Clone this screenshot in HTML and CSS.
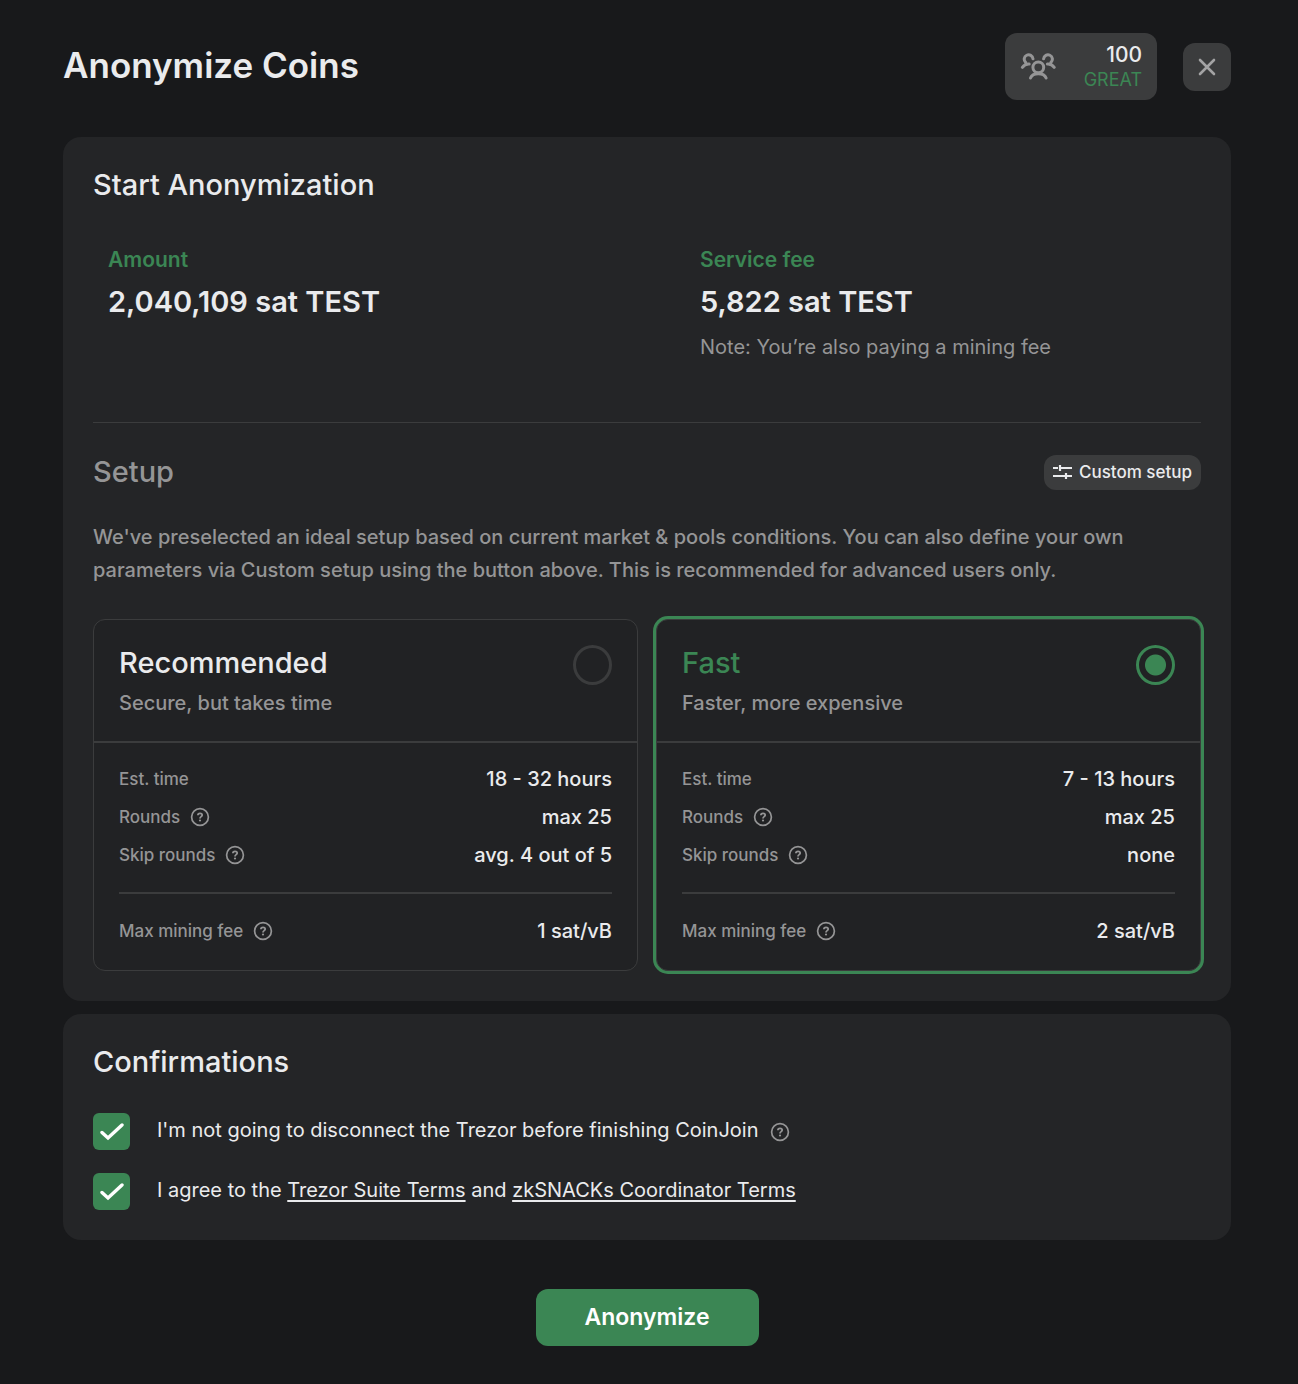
FILE: index.html
```html
<!DOCTYPE html>
<html lang="en">
<head>
<meta charset="utf-8">
<meta name="viewport" content="width=device-width, initial-scale=1">
<title>Anonymize Coins</title>
<link rel="stylesheet" href="styles.css">
</head>
<body>
<svg class="sprite" aria-hidden="true">
  <symbol id="help" viewBox="0 0 20 20">
    <circle cx="10" cy="10" r="8.4" fill="none" stroke="currentColor" stroke-width="1.7"/>
    <path d="M7.9 8.2C7.9 5.7 12.2 5.7 12.2 8.1C12.2 9.7 10 9.6 10 11.4" fill="none" stroke="currentColor" stroke-width="1.8"/>
    <circle cx="10" cy="13.5" r="1.1" fill="currentColor"/>
  </symbol>
</svg>
<form class="page">
  <header class="top">
    <h1 class="title">Anonymize Coins</h1>
    <div class="privacy">
      <svg class="people" viewBox="0 0 36 28" aria-hidden="true" fill="none" stroke="currentColor" stroke-width="3" stroke-linecap="round">
        <circle cx="18.3" cy="14.3" r="5.4"/>
        <path d="M10.5 25C12.5 19.2 24.1 19.2 26.1 25"/>
        <path d="M5.6 9.4A4.4 4.4 0 1 1 13 5.8M2.4 14.4C4.4 11.6 6.4 10.9 9.2 11.1"/>
        <path d="M31 9.4A4.4 4.4 0 1 0 23.6 5.800M34.200 14.400C32.200 11.600 30.200 10.900 27.400 11.100"/>
      </svg>
      <div class="score"><span class="score-value">100</span><span class="score-label">GREAT</span></div>
    </div>
    <button class="close" type="button" aria-label="Close">
      <svg viewBox="0 0 18 18" width="18" height="18" aria-hidden="true"><path d="M2 2L16 16M16 2L2 16" fill="none" stroke="currentColor" stroke-width="2.6" stroke-linecap="round"/></svg>
    </button>
  </header>

  <section class="card">
    <h2 class="heading">Start Anonymization</h2>
    <div class="summary">
      <div class="figure">
        <h3 class="figure-label">Amount</h3>
        <p class="figure-value">2,040,109 sat TEST</p>
      </div>
      <div class="figure">
        <h3 class="figure-label">Service fee</h3>
        <p class="figure-value">5,822 sat TEST</p>
        <p class="figure-note">Note: You’re also paying a mining fee</p>
      </div>
    </div>
    <div class="setup">
      <h2 class="heading heading-muted">Setup</h2>
      <button class="custom" type="button">
        <svg viewBox="0 0 19 16" width="19" height="16" aria-hidden="true" fill="none" stroke="currentColor" stroke-width="2.2"><path d="M0 4H5M7 1V7M7 4H19M0 12H12M19 12H15M13 9V15M13 12H16"/></svg>
        Custom setup
      </button>
    </div>
    <p class="intro">We've preselected an ideal setup based on current market &amp; pools conditions. You can also define your own parameters via Custom setup using the button above. This is recommended for advanced users only.</p>
    <div class="options">
      <div class="option">
        <div class="option-head">
          <label class="option-text" for="recommended">
            <span class="option-name">Recommended</span>
            <span class="option-hint">Secure, but takes time</span>
          </label>
          <input class="radio" type="radio" name="setup" id="recommended">
        </div>
        <dl class="facts">
          <div class="fact"><dt>Est. time</dt><dd>18 - 32 hours</dd></div>
          <div class="fact"><dt>Rounds <svg class="help"><use href="#help"/></svg></dt><dd>max 25</dd></div>
          <div class="fact"><dt>Skip rounds <svg class="help"><use href="#help"/></svg></dt><dd>avg. 4 out of 5</dd></div>
          <div class="fact fact-fee"><dt>Max mining fee <svg class="help"><use href="#help"/></svg></dt><dd>1 sat/vB</dd></div>
        </dl>
      </div>
      <div class="option option-selected">
        <div class="option-head">
          <label class="option-text" for="fast">
            <span class="option-name">Fast</span>
            <span class="option-hint">Faster, more expensive</span>
          </label>
          <input class="radio" type="radio" name="setup" id="fast" checked>
        </div>
        <dl class="facts">
          <div class="fact"><dt>Est. time</dt><dd>7 - 13 hours</dd></div>
          <div class="fact"><dt>Rounds <svg class="help"><use href="#help"/></svg></dt><dd>max 25</dd></div>
          <div class="fact"><dt>Skip rounds <svg class="help"><use href="#help"/></svg></dt><dd>none</dd></div>
          <div class="fact fact-fee"><dt>Max mining fee <svg class="help"><use href="#help"/></svg></dt><dd>2 sat/vB</dd></div>
        </dl>
      </div>
    </div>
  </section>

  <section class="card">
    <h2 class="heading">Confirmations</h2>
    <div class="checks">
      <div class="check">
        <span class="box"><input class="tick" type="checkbox" id="connected" checked><svg class="mark" viewBox="0 0 24 18" aria-hidden="true"><path d="M2 9.5L8 15L22 2" fill="none" stroke="currentColor" stroke-width="3.4" stroke-linecap="round"/></svg></span>
        <label for="connected">I'm not going to disconnect the Trezor before finishing CoinJoin</label>
        <svg class="help"><use href="#help"/></svg>
      </div>
      <div class="check">
        <span class="box"><input class="tick" type="checkbox" id="terms" checked><svg class="mark" viewBox="0 0 24 18" aria-hidden="true"><path d="M2 9.5L8 15L22 2" fill="none" stroke="currentColor" stroke-width="3.4" stroke-linecap="round"/></svg></span>
        <label for="terms">I agree to the <a href="#suite-terms">Trezor Suite Terms</a> and <a href="#coordinator-terms">zkSNACKs Coordinator Terms</a></label>
      </div>
    </div>
  </section>

  <button class="submit" type="submit">Anonymize</button>
</form>
</body>
</html>
```

FILE: styles.css
```css
:root {
  --bg: #18191b;
  --card: #242527;
  --option: #212224;
  --grey: #3b3c3d;
  --text: #eaebed;
  --muted: #959596;
  --green: #3b8654;
}

* {
  box-sizing: border-box;
  margin: 0;
  padding: 0;
}

body {
  background: var(--bg);
  color: var(--text);
  font-family: Inter, "Liberation Sans", sans-serif;
  font-size: 20px;
  line-height: 32px;
}

button,
input {
  font: inherit;
  border: 0;
  cursor: pointer;
}

.sprite {
  display: none;
}

.page {
  display: flex;
  flex-direction: column;
  gap: 13px;
  padding: 33px 67px 38px 63px;
}

.top {
  display: flex;
  align-items: center;
  margin-bottom: 24px;
}

.title {
  flex: 1;
  padding-bottom: 4px;
  font-size: 35px;
  font-weight: 600;
  line-height: 44px;
}

.privacy {
  display: flex;
  align-items: center;
  justify-content: space-between;
  width: 152px;
  height: 67px;
  margin-right: 26px;
  padding: 0 15px;
  border-radius: 12px;
  background: var(--grey);
}

.people {
  width: 36px;
  height: 28px;
  color: var(--muted);
}

.score {
  display: flex;
  flex-direction: column;
  align-items: flex-end;
  line-height: 25px;
}

.score-value {
  font-size: 21px;
  font-weight: 500;
}

.score-label {
  color: var(--green);
  font-size: 18px;
}

.close {
  display: grid;
  place-items: center;
  width: 48px;
  height: 48px;
  border-radius: 12px;
  background: var(--grey);
  color: #a3a3a4;
}

.card {
  padding: 30px;
  border-radius: 18px;
  background: var(--card);
}

.heading {
  font-size: 29px;
  font-weight: 500;
  line-height: 36px;
}

.heading-muted {
  color: var(--muted);
}

.summary {
  display: grid;
  grid-template-columns: 1fr 1fr;
  gap: 76px;
  margin-top: 41px;
  padding-bottom: 59px;
  border-bottom: 1px solid var(--grey);
}

.figure {
  padding-left: 15px;
}

.figure-label {
  color: var(--green);
  font-size: 21px;
  font-weight: 600;
}

.figure-value {
  margin: 4px 0 7px;
  font-size: 29px;
  font-weight: 600;
  line-height: 44px;
}

.figure-note,
.intro {
  color: var(--muted);
}

.setup {
  display: flex;
  align-items: center;
  justify-content: space-between;
  margin-top: 31px;
}

.custom {
  display: flex;
  align-items: center;
  gap: 7px;
  height: 35px;
  padding: 0 9px;
  border-radius: 12px;
  background: var(--grey);
  color: var(--text);
  font-size: 17px;
  font-weight: 500;
}

.intro {
  margin-top: 31px;
  font-weight: 500;
  line-height: 33px;
}

.options {
  display: grid;
  grid-template-columns: 1fr 1fr;
  gap: 18px;
  margin-top: 32px;
}

.option {
  border: 1px solid var(--grey);
  border-radius: 12px;
  background: var(--option);
}

.option-selected {
  box-shadow: 0 0 0 3px var(--green);
}

.option-head {
  display: flex;
  justify-content: space-between;
  padding: 25px 25px 22px;
  border-bottom: 2px solid var(--grey);
}

.option-text {
  display: flex;
  flex-direction: column;
  gap: 6px;
}

.option-name {
  font-size: 29px;
  font-weight: 500;
  line-height: 36px;
}

.option-selected .option-name {
  color: var(--green);
}

.option-hint {
  color: var(--muted);
  font-weight: 500;
}

.radio {
  appearance: none;
  width: 39px;
  height: 40px;
  border: 3px solid var(--grey);
  border-radius: 50%;
}

.radio:checked {
  border-color: var(--green);
  background: radial-gradient(circle, var(--green) 10px, transparent 11px);
}

.facts {
  padding: 17px 25px 2px;
}

.fact {
  display: flex;
  align-items: center;
  justify-content: space-between;
  height: 38px;
}

.fact dt {
  display: flex;
  align-items: center;
  gap: 10px;
  color: var(--muted);
  font-size: 17px;
  font-weight: 500;
}

.fact dd {
  font-weight: 500;
}

.fact-fee {
  height: 76px;
  margin-top: 18px;
  border-top: 2px solid var(--grey);
}

.help {
  width: 20px;
  height: 20px;
  color: var(--muted);
}

.checks {
  display: flex;
  flex-direction: column;
  gap: 23px;
  margin-top: 33px;
}

.check {
  display: flex;
  align-items: center;
}

.check label {
  padding-bottom: 3px;
}

.check .help {
  margin-left: 12px;
}

.check a {
  color: inherit;
  text-decoration-thickness: 2px;
  text-underline-offset: 3px;
}

.box {
  display: grid;
  width: 37px;
  height: 37px;
  margin-right: 27px;
}

.tick,
.mark {
  grid-area: 1 / 1;
}

.tick {
  appearance: none;
  border-radius: 6px;
  background: var(--grey);
}

.tick:checked {
  background: var(--green);
}

.mark {
  place-self: center;
  width: 24px;
  height: 18px;
  color: #fff;
  pointer-events: none;
}

.submit {
  align-self: center;
  width: 223px;
  height: 57px;
  margin-top: 36px;
  padding-bottom: 2px;
  border-radius: 12px;
  background: var(--green);
  color: #fff;
  font-size: 23px;
  font-weight: 600;
}
```
